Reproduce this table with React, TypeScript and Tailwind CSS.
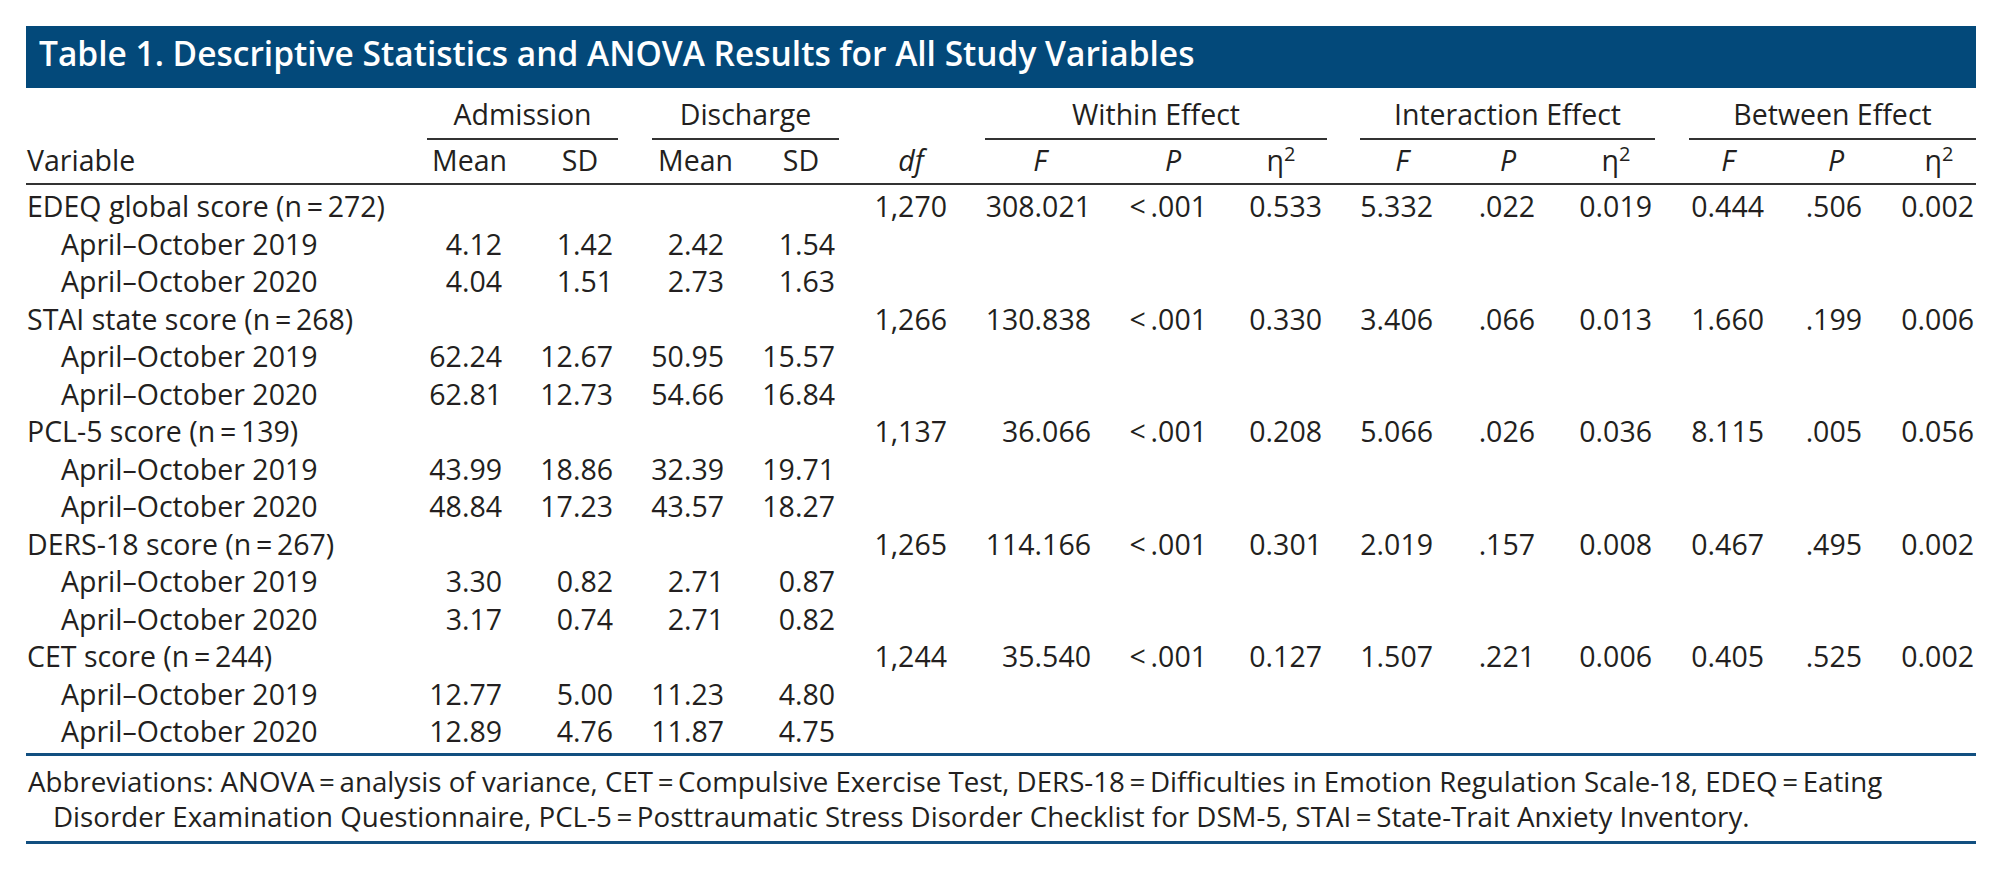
import React from 'react'

// column grid shared by every row of the table
const GRID =
  'grid grid-cols-[374px_102px_111px_111px_111px_112px_144px_116px_115px_111px_102px_117px_112px_98px_114px]'

type Group = {
  label: string
  df: string
  within: [string, string, string]
  interaction: [string, string, string]
  between: [string, string, string]
  y2019: [string, string, string, string]
  y2020: [string, string, string, string]
}

const groups: Group[] = [
  {
    label: 'EDEQ global score (n\u2009=\u2009272)',
    df: '1,270',
    within: ['308.021', '<\u2009.001', '0.533'],
    interaction: ['5.332', '.022', '0.019'],
    between: ['0.444', '.506', '0.002'],
    y2019: ['4.12', '1.42', '2.42', '1.54'],
    y2020: ['4.04', '1.51', '2.73', '1.63'],
  },
  {
    label: 'STAI state score (n\u2009=\u2009268)',
    df: '1,266',
    within: ['130.838', '<\u2009.001', '0.330'],
    interaction: ['3.406', '.066', '0.013'],
    between: ['1.660', '.199', '0.006'],
    y2019: ['62.24', '12.67', '50.95', '15.57'],
    y2020: ['62.81', '12.73', '54.66', '16.84'],
  },
  {
    label: 'PCL-5 score (n\u2009=\u2009139)',
    df: '1,137',
    within: ['36.066', '<\u2009.001', '0.208'],
    interaction: ['5.066', '.026', '0.036'],
    between: ['8.115', '.005', '0.056'],
    y2019: ['43.99', '18.86', '32.39', '19.71'],
    y2020: ['48.84', '17.23', '43.57', '18.27'],
  },
  {
    label: 'DERS-18 score (n\u2009=\u2009267)',
    df: '1,265',
    within: ['114.166', '<\u2009.001', '0.301'],
    interaction: ['2.019', '.157', '0.008'],
    between: ['0.467', '.495', '0.002'],
    y2019: ['3.30', '0.82', '2.71', '0.87'],
    y2020: ['3.17', '0.74', '2.71', '0.82'],
  },
  {
    label: 'CET score (n\u2009=\u2009244)',
    df: '1,244',
    within: ['35.540', '<\u2009.001', '0.127'],
    interaction: ['1.507', '.221', '0.006'],
    between: ['0.405', '.525', '0.002'],
    y2019: ['12.77', '5.00', '11.23', '4.80'],
    y2020: ['12.89', '4.76', '11.87', '4.75'],
  },
]

const Eta = () => (
  <span>
    η<sup className="text-[20px]">2</sup>
  </span>
)

function Num({ v, last }: { v?: string; last?: boolean }) {
  return <div className={last ? 'text-right pr-[2px]' : 'text-right'}>{v ?? ''}</div>
}

function SubRow({ label, vals }: { label: string; vals: string[] }) {
  return (
    <div className={GRID}>
      <div className="pl-[35px] whitespace-nowrap">{label}</div>
      {vals.map((v, i) => (
        <Num key={i} v={v} />
      ))}
      {Array.from({ length: 10 }).map((_, i) => (
        <div key={'e' + i} />
      ))}
    </div>
  )
}

function MainRow({ g }: { g: Group }) {
  const stats = [g.df, ...g.within, ...g.interaction, ...g.between]
  return (
    <div className={GRID}>
      <div className="pl-[1px] whitespace-nowrap">{g.label}</div>
      <div />
      <div />
      <div />
      <div />
      {stats.map((v, i) => (
        <Num key={i} v={v} last={i === stats.length - 1} />
      ))}
    </div>
  )
}

export default function App() {
  return (
    <div className="min-h-screen bg-white text-[#231f20] font-['Open_Sans',sans-serif] pt-[26px] pl-[26px]">
      <div className="w-[1950px]">
        {/* title */}
        <div className="h-[62px] bg-[#03497a] flex items-center pl-[13px] pb-[6px]">
          <h1 className="text-white text-[33.5px] font-semibold leading-none whitespace-nowrap">
            Table 1. Descriptive Statistics and ANOVA Results for All Study Variables
          </h1>
        </div>

        <div className="text-[28.5px] leading-[37.5px]">
          {/* group headers */}
          <div className={GRID + ' pt-[8px]'}>
            <div className="col-start-2 col-span-2 ml-[27px] mr-[-5px] text-center pb-[4.5px] border-b-2 border-[#333]">
              Admission
            </div>
            <div className="col-start-4 col-span-2 ml-[39px] mr-[-4px] text-center pb-[4.5px] border-b-2 border-[#333]">
              Discharge
            </div>
            <div className="col-start-7 col-span-3 ml-[38px] mr-[-5px] text-center pb-[4.5px] border-b-2 border-[#333]">
              Within Effect
            </div>
            <div className="col-start-10 col-span-3 ml-[38px] mr-[-3px] text-center pb-[4.5px] border-b-2 border-[#333]">
              Interaction Effect
            </div>
            <div className="col-start-13 col-span-3 ml-[37px] text-center pb-[4.5px] border-b-2 border-[#333]">
              Between Effect
            </div>
          </div>

          {/* column headers */}
          <div className={GRID + ' pt-[2px] pb-[3.5px] border-b-2 border-[#333]'}>
            <div className="pl-[1px]">Variable</div>
            <div className="text-center pl-[32px]">Mean</div>
            <div className="text-center pl-[45px]">SD</div>
            <div className="text-center pl-[45px]">Mean</div>
            <div className="text-center pl-[43px]">SD</div>
            <div className="text-center pl-[40px] italic">df</div>
            <div className="text-center pl-[42px] italic">F</div>
            <div className="text-center pl-[48px] italic">P</div>
            <div className="text-center pl-[33px]">
              <Eta />
            </div>
            <div className="text-center pl-[49px] italic">F</div>
            <div className="text-center pl-[48px] italic">P</div>
            <div className="text-center pl-[45px]">
              <Eta />
            </div>
            <div className="text-center pl-[40px] italic">F</div>
            <div className="text-center pl-[46px] italic">P</div>
            <div className="text-center pl-[40px]">
              <Eta />
            </div>
          </div>

          {/* body */}
          <div className="pt-[3px] pb-[2px] border-b-[3px] border-[#114f80]">
            {groups.map((g) => (
              <React.Fragment key={g.label}>
                <MainRow g={g} />
                <SubRow label="April–October 2019" vals={g.y2019} />
                <SubRow label="April–October 2020" vals={g.y2020} />
              </React.Fragment>
            ))}
          </div>
        </div>

        {/* footnote */}
        <div className="text-[27.7px] leading-[35px] pt-[8px] pb-[7px] border-b-[3px] border-[#114f80] whitespace-nowrap">
          <div className="pl-[2px]">
            Abbreviations: ANOVA{'\u2009=\u2009'}analysis of variance, CET{'\u2009=\u2009'}Compulsive Exercise Test, DERS-18{'\u2009=\u2009'}Difficulties in Emotion Regulation Scale-18, EDEQ{'\u2009=\u2009'}Eating
          </div>
          <div className="pl-[27px]">
            Disorder Examination Questionnaire, PCL-5{'\u2009=\u2009'}Posttraumatic Stress Disorder Checklist for DSM-5, STAI{'\u2009=\u2009'}State-Trait Anxiety Inventory.
          </div>
        </div>
      </div>
    </div>
  )
}
